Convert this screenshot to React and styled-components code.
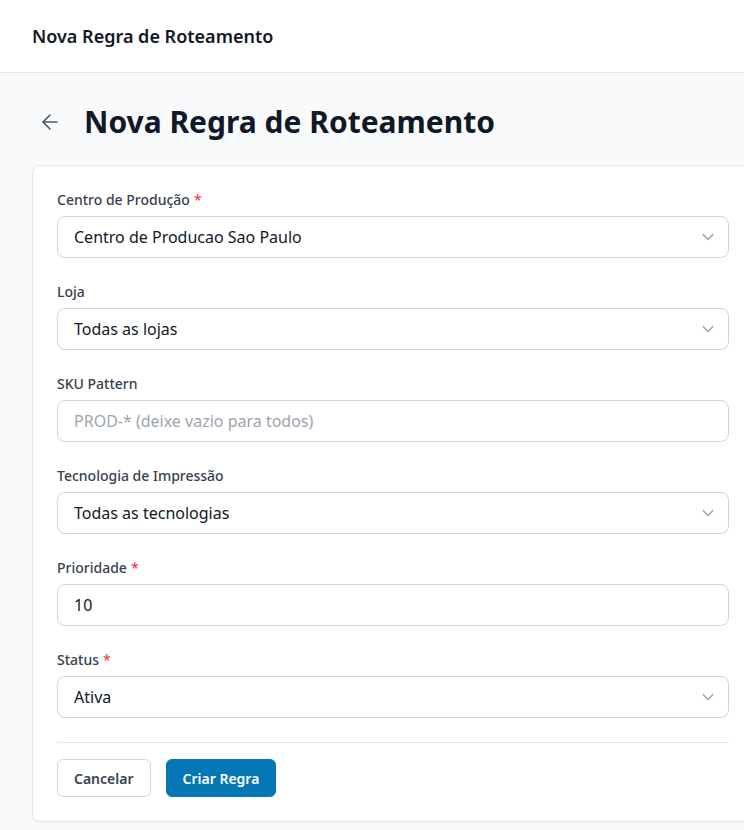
import React from 'react';
import styled, { createGlobalStyle } from 'styled-components';
import { ArrowLeft } from 'lucide-react';

const GlobalStyle = createGlobalStyle`
  html, body {
    margin: 0;
    padding: 0;
    overflow-x: hidden;
    background: #f9fafb;
  }
  body {
    font-family: 'Noto Sans', 'Open Sans', sans-serif;
    color: #111827;
  }
  * { box-sizing: border-box; }
`;

const TopBar = styled.header`
  height: 73px;
  background: #ffffff;
  border-bottom: 1px solid #e5e7eb;
  display: flex;
  align-items: center;
  padding: 0 32px;
`;

const TopTitle = styled.h1`
  margin: 0;
  font-size: 18px;
  font-weight: 600;
  color: #111827;
`;

const Main = styled.main`
  padding: 31px 0 32px 32px;
  background: #f9fafb;
`;

const TitleRow = styled.div`
  display: flex;
  align-items: center;
  gap: 16px;
  margin-bottom: 25px;
`;

const BackButton = styled.button`
  border: none;
  background: transparent;
  padding: 6px;
  display: flex;
  color: #4b5563;
  cursor: pointer;
`;

const PageTitle = styled.h2`
  margin: 0;
  font-size: 30px;
  line-height: 36px;
  font-weight: 700;
  color: #111827;
`;

const Card = styled.section`
  width: 722px;
  min-width: 722px;
  background: #ffffff;
  border: 1px solid #e5e7eb;
  border-radius: 8px;
  box-shadow: 0 1px 2px rgba(0, 0, 0, 0.04);
  padding: 24px;
`;

const Form = styled.form`
  display: flex;
  flex-direction: column;
  gap: 24px;
`;

const Field = styled.div`
  display: flex;
  flex-direction: column;
  gap: 6px;
`;

const Label = styled.label`
  font-size: 14px;
  line-height: 20px;
  font-weight: 500;
  color: #374151;
`;

const Required = styled.span`
  color: #ef4444;
  margin-left: 4px;
`;

const Control = styled.div`
  position: relative;
  height: 42px;
  border: 1px solid #d1d5db;
  border-radius: 8px;
  background: #ffffff;
  display: flex;
  align-items: center;
  padding: 0 16px;
  font-size: 16px;
  color: ${({ $placeholder }) => ($placeholder ? '#9ca3af' : '#111827')};
`;

const Chevron = styled.svg`
  position: absolute;
  right: 8px;
  top: 50%;
  transform: translateY(-50%);
  width: 24px;
  height: 24px;
`;

const Footer = styled.div`
  border-top: 1px solid #e5e7eb;
  padding-top: 16px;
  display: flex;
  gap: 15px;
`;

const Button = styled.button`
  height: 38px;
  padding: 0 16px;
  border-radius: 6px;
  font-family: inherit;
  font-size: 14px;
  font-weight: 600;
  cursor: pointer;
  border: 1px solid ${({ $primary }) => ($primary ? '#0577b5' : '#d1d5db')};
  background: ${({ $primary }) => ($primary ? '#0577b5' : '#ffffff')};
  color: ${({ $primary }) => ($primary ? '#ffffff' : '#374151')};
`;

const fields = [
  { label: 'Centro de Produção', required: true, value: 'Centro de Producao Sao Paulo', select: true },
  { label: 'Loja', value: 'Todas as lojas', select: true },
  { label: 'SKU Pattern', value: 'PROD-* (deixe vazio para todos)', placeholder: true },
  { label: 'Tecnologia de Impressão', value: 'Todas as tecnologias', select: true },
  { label: 'Prioridade', required: true, value: '10' },
  { label: 'Status', required: true, value: 'Ativa', select: true },
];

const SelectChevron = () => (
  <Chevron viewBox="0 0 20 20" fill="none">
    <path d="M6 8l4 4 4-4" stroke="#a1a6b0" strokeWidth="1.25" strokeLinecap="round" strokeLinejoin="round" />
  </Chevron>
);

export default function App() {
  return (
    <>
      <GlobalStyle />
      <TopBar>
        <TopTitle>Nova Regra de Roteamento</TopTitle>
      </TopBar>
      <Main>
        <TitleRow>
          <BackButton aria-label="Voltar">
            <ArrowLeft size={24} strokeWidth={1.6} />
          </BackButton>
          <PageTitle>Nova Regra de Roteamento</PageTitle>
        </TitleRow>
        <Card>
          <Form>
            {fields.map((f) => (
              <Field key={f.label}>
                <Label>
                  {f.label}
                  {f.required && <Required>*</Required>}
                </Label>
                <Control $placeholder={f.placeholder}>
                  {f.value}
                  {f.select && <SelectChevron />}
                </Control>
              </Field>
            ))}
            <Footer>
              <Button type="button">Cancelar</Button>
              <Button type="button" $primary>Criar Regra</Button>
            </Footer>
          </Form>
        </Card>
      </Main>
    </>
  );
}
